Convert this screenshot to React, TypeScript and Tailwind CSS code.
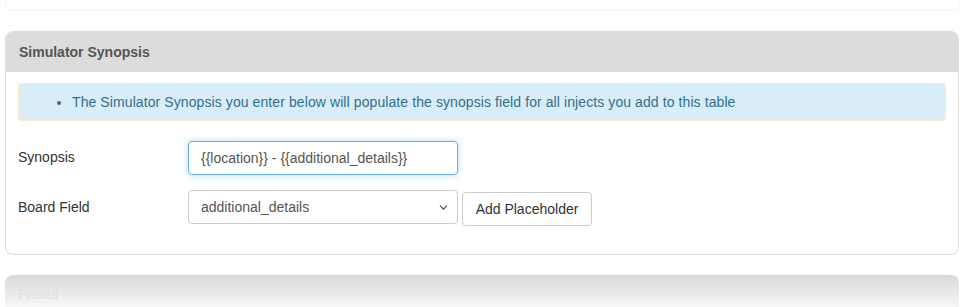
import { ChevronDown } from "lucide-react";

const font = { fontFamily: '"Liberation Sans", Arial, sans-serif' };

export default function App() {
  return (
    <div className="h-[307px] overflow-hidden bg-white px-[5px] text-[14px] text-[#333]" style={font}>
      {/* bottom edge of the card above */}
      <div className="h-[11px] rounded-b-[8px] border-x border-b border-[#f2f2f2]" />

      {/* Simulator Synopsis panel */}
      <div className="mt-[20px] w-[954px] rounded-[8px] border border-[#dcdcdc] bg-white">
        <div className="flex h-[40px] items-center rounded-t-[7px] bg-[#dcdcdc] px-[13px]">
          <h3 className="text-[14px] font-bold text-[#555]">Simulator Synopsis</h3>
        </div>
        <div className="px-[12px] pb-[28px] pt-[11px]">
          <div className="flex h-[38px] items-center rounded-[4px] border border-[#faebcc] bg-[#d9edf7] pl-[40px] tracking-[0.09px] text-[#31708f]">
            <ul className="list-disc pl-[13px]">
              <li>The Simulator Synopsis you enter below will populate the synopsis field for all injects you add to this table</li>
            </ul>
          </div>

          <div className="mt-[20px] flex items-center">
            <label className="w-[170px] pb-[2px]">Synopsis</label>
            <div className="flex h-[34px] w-[270px] items-center rounded-[4px] border border-[#66afe9] px-[12px] text-[#555] shadow-[0_0_6px_rgba(102,175,233,0.5)]">
              {"{{location}} - {{additional_details}}"}
            </div>
          </div>

          <div className="mt-[15px] flex items-start">
            <label className="w-[170px] pt-[7px]">Board Field</label>
            <div className="flex h-[34px] w-[270px] items-center justify-between rounded-[4px] border border-[#ccc] pl-[12px] pr-[7px] text-[#555]">
              <span>additional_details</span>
              <ChevronDown size={13} strokeWidth={2} className="text-[#444]" />
            </div>
            <button className="ml-[4px] mt-[2px] h-[34px] w-[130px] rounded-[4px] border border-[#ccc] bg-white text-[#333]">
              Add Placeholder
            </button>
          </div>
        </div>
      </div>

      {/* Fields panel, cut off and faded */}
      <div className="mt-[20px] h-[40px] w-[954px] rounded-t-[8px] bg-gradient-to-b from-[#d8d8d8] via-[#ececec] to-white px-[13px] pt-[9px]">
        <h3 className="text-[14px] font-bold text-[#e2e2e2]">Fields</h3>
      </div>
    </div>
  );
}
